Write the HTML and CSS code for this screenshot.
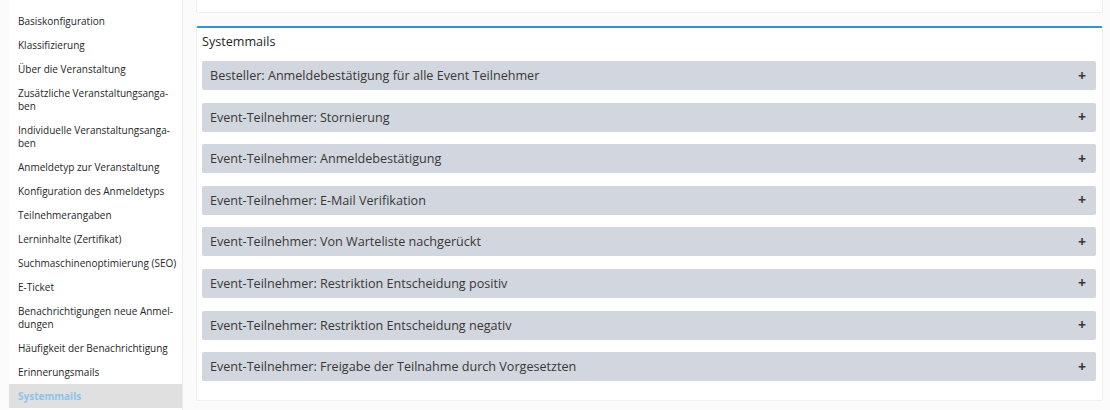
FILE: index.html
```html
<!DOCTYPE html>
<html lang="de">
<head>
<meta charset="utf-8">
<title>Systemmails</title>
<link rel="stylesheet" href="styles.css">
</head>
<body>
<div class="layout">
  <nav class="sidenav">
    <a class="nav-item" href="#">Basiskonfiguration</a>
    <a class="nav-item" href="#">Klassifizierung</a>
    <a class="nav-item" href="#">Über die Veranstaltung</a>
    <a class="nav-item" href="#">Zusätzliche Veranstaltungsanga-<br>ben</a>
    <a class="nav-item" href="#">Individuelle Veranstaltungsanga-<br>ben</a>
    <a class="nav-item" href="#">Anmeldetyp zur Veranstaltung</a>
    <a class="nav-item" href="#">Konfiguration des Anmeldetyps</a>
    <a class="nav-item" href="#">Teilnehmerangaben</a>
    <a class="nav-item" href="#">Lerninhalte (Zertifikat)</a>
    <a class="nav-item" href="#">Suchmaschinenoptimierung (SEO)</a>
    <a class="nav-item" href="#">E-Ticket</a>
    <a class="nav-item" href="#">Benachrichtigungen neue Anmel-<br>dungen</a>
    <a class="nav-item" href="#">Häufigkeit der Benachrichtigung</a>
    <a class="nav-item" href="#">Erinnerungsmails</a>
    <a class="nav-item active" href="#">Systemmails</a>
  </nav>

  <main class="content">
    <div class="card card-top"></div>

    <section class="card card-accent">
      <h2 class="card-title">Systemmails</h2>
      <div class="accordion">
        <div class="acc-head"><span>Besteller: Anmeldebestätigung für alle Event Teilnehmer</span><span class="acc-plus">+</span></div>
        <div class="acc-head"><span>Event-Teilnehmer: Stornierung</span><span class="acc-plus">+</span></div>
        <div class="acc-head"><span>Event-Teilnehmer: Anmeldebestätigung</span><span class="acc-plus">+</span></div>
        <div class="acc-head"><span>Event-Teilnehmer: E-Mail Verifikation</span><span class="acc-plus">+</span></div>
        <div class="acc-head"><span>Event-Teilnehmer: Von Warteliste nachgerückt</span><span class="acc-plus">+</span></div>
        <div class="acc-head"><span>Event-Teilnehmer: Restriktion Entscheidung positiv</span><span class="acc-plus">+</span></div>
        <div class="acc-head"><span>Event-Teilnehmer: Restriktion Entscheidung negativ</span><span class="acc-plus">+</span></div>
        <div class="acc-head"><span>Event-Teilnehmer: Freigabe der Teilnahme durch Vorgesetzten</span><span class="acc-plus">+</span></div>
      </div>
    </section>
  </main>
</div>
</body>
</html>
```

FILE: styles.css
```css
html, body {
  margin: 0;
  padding: 0;
  background: #fbfbfb;
  font-family: "Open Sans", "Noto Sans", sans-serif;
  color: #333;
}

.layout {
  display: flex;
  align-items: flex-start;
  gap: 13px;
  padding-left: 9px;
}

/* left navigation */
.sidenav {
  width: 173px;
  flex: none;
  display: flex;
  flex-direction: column;
  background: #fff;
  border-right: 1px solid #ececec;
  padding-top: 9px;
  min-height: 401px;
}

.nav-item {
  display: block;
  padding: 5.5px 4px 5.5px 9px;
  font-size: 10px;
  line-height: 13px;
  white-space: nowrap;
  color: #262626;
  text-decoration: none;
}

.nav-item.active {
  background: #e0e0e0;
  color: #8ec3ea;
  font-weight: 700;
}

/* main column */
.content {
  flex: 1;
  margin-right: 7px;
  display: flex;
  flex-direction: column;
  gap: 13px;
}

.card {
  background: #fff;
  border: 1px solid #efefef;
  border-radius: 2px;
}

.card-top {
  height: 12px;
  border-top: none;
}

.card-accent {
  border-top: 2px solid #3e8fc7;
  padding: 0 6px 19px 5px;
}

.card-title {
  margin: 0;
  padding: 5px 0 0 0;
  height: 33px;
  box-sizing: border-box;
  font-size: 12.6px;
  line-height: 17px;
  font-weight: 400;
  color: #262626;
}

.accordion {
  display: flex;
  flex-direction: column;
  gap: 12.6px;
}

.acc-head {
  display: flex;
  justify-content: space-between;
  align-items: center;
  height: 29px;
  padding: 0 10px 0 8px;
  background: #d2d6de;
  border-radius: 2px;
  font-size: 12.6px;
  color: #383838;
}

.acc-plus {
  font-weight: 700;
  font-size: 14px;
  line-height: 14px;
  color: #383838;
}
```
